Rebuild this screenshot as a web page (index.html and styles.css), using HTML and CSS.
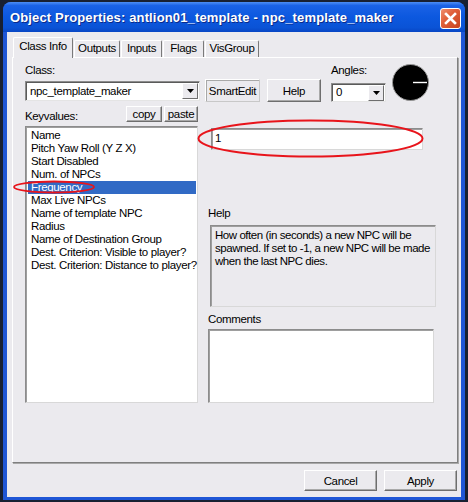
FILE: index.html
```html
<!DOCTYPE html>
<html lang="en">
<head>
  <meta charset="UTF-8" />
  <title>Object Properties</title>
  <link rel="stylesheet" href="styles.css">
</head>
<body>

  <div class="window">
    <div class="titlebar">
      <span class="title">Object Properties: antlion01_template - npc_template_maker</span>
      <span class="close">
        <svg width="13" height="13" viewBox="0 0 13 13"><path d="M2 2 L11 11 M11 2 L2 11" stroke="#fff" stroke-width="2.6" stroke-linecap="square"/></svg>
      </span>
    </div>

    <div class="dialog">
      <!-- Tab strip -->
      <div class="tabs">
        <div class="tab active tab-class">Class Info</div>
        <div class="tab tab-outputs">Outputs</div>
        <div class="tab tab-inputs">Inputs</div>
        <div class="tab tab-flags">Flags</div>
        <div class="tab tab-vis">VisGroup</div>
      </div>

      <div class="panel">
        <div class="top-row">
          <div class="field class-field">
            <span class="label">Class:</span>
            <div class="combo">
              <span class="combo-text">npc_template_maker</span>
              <span class="drop"><svg width="7" height="4" viewBox="0 0 7 4"><path d="M0 0 H7 L3.5 4 Z" fill="#000"/></svg></span>
            </div>
          </div>
          <button class="btn smartedit">SmartEdit</button>
          <button class="btn help-btn">Help</button>
          <div class="field angles-field">
            <span class="label">Angles:</span>
            <div class="combo combo-small">
              <span class="combo-text">0</span>
              <span class="drop"><svg width="7" height="4" viewBox="0 0 7 4"><path d="M0 0 H7 L3.5 4 Z" fill="#000"/></svg></span>
            </div>
          </div>
          <svg class="dial" width="37" height="37" viewBox="0 0 37 37">
            <circle cx="18.5" cy="18.5" r="18" fill="#000" stroke="#9a9a9a" stroke-width="1"/>
            <line x1="21" y1="18.5" x2="35" y2="18.5" stroke="#fff" stroke-width="1.4"/>
          </svg>
        </div>

        <div class="kv-row">
          <span class="label kv-label">Keyvalues:</span>
          <button class="btn btn-mini copy">copy</button>
          <button class="btn btn-mini paste">paste</button>
        </div>

        <div class="main-row">
          <ul class="list">
            <li>Name</li>
            <li>Pitch Yaw Roll (Y Z X)</li>
            <li>Start Disabled</li>
            <li>Num. of NPCs</li>
            <li class="selected">Frequency</li>
            <li>Max Live NPCs</li>
            <li>Name of template NPC</li>
            <li>Radius</li>
            <li>Name of Destination Group</li>
            <li>Dest. Criterion: Visible to player?</li>
            <li>Dest. Criterion: Distance to player?</li>
          </ul>

          <div class="side">
            <div class="edit">1</div>
            <span class="label help-label">Help</span>
            <div class="help-box">How often (in seconds) a new NPC will be spawned. If set to -1, a new NPC will be made when the last NPC dies.</div>
            <span class="label comments-label">Comments</span>
            <div class="comments"></div>
          </div>
        </div>

        <!-- red pen marks drawn over the form -->
        <svg class="marks" width="440" height="200" viewBox="0 0 440 200">
          <ellipse cx="297.5" cy="80.5" rx="112" ry="18" fill="none" stroke="#e8141b" stroke-width="2"/>
          <ellipse cx="41" cy="129" rx="40" ry="5.5" fill="none" stroke="#e8141b" stroke-width="1.8"/>
        </svg>
      </div>

      <div class="buttons">
        <button class="btn big">Cancel</button>
        <button class="btn big">Apply</button>
      </div>
    </div>
  </div>

</body>
</html>
```

FILE: styles.css
```css
* {
  margin: 0;
  padding: 0;
  box-sizing: border-box;
}

body {
  background: #182032;
  font-family: "Liberation Sans", Arial, sans-serif;
  font-size: 11.5px;
  letter-spacing: -0.35px;
  color: #000;
  width: 468px;
  height: 502px;
  overflow: hidden;
}

.window {
  margin: 2px 0 0 3px;
  width: 462px;
  height: 498px;
  background: #1f56d6;
  border-radius: 8px 8px 0 0;
  padding: 0 4px 3px 4px;
  display: flex;
  flex-direction: column;
}

.titlebar {
  height: 30px;
  margin: 0 -4px;
  padding: 0 4px 0 7px;
  border-radius: 8px 8px 0 0;
  background: linear-gradient(#4d8ff5 0%, #1a62e6 12%, #0c58df 50%, #0a53d6 85%, #0846c4 100%);
  display: flex;
  align-items: center;
  justify-content: space-between;
}

.title {
  color: #fff;
  font-weight: bold;
  font-size: 13px;
  letter-spacing: 0.15px;
  text-shadow: 1px 1px 0 #0a2a8a;
  white-space: nowrap;
}

.close {
  width: 21px;
  height: 21px;
  margin-top: 2px;
  border: 1px solid #fff;
  border-radius: 3px;
  background: linear-gradient(135deg, #f09070 0%, #e0603a 40%, #c8431e 100%);
  display: flex;
  align-items: center;
  justify-content: center;
}

.dialog {
  flex: 1;
  background: #ebeaee;
  padding: 5px 3px 0 5px;
}

/* tabs */
.tabs {
  display: flex;
  align-items: flex-end;
  height: 20px;
  margin-left: 1px;
}

.tab {
  height: 17px;
  border: 1px solid #fff;
  border-right: 1px solid #7a7a7a;
  border-bottom: none;
  border-radius: 2px 2px 0 0;
  text-align: center;
  line-height: 15px;
  white-space: nowrap;
}

.tab.active {
  height: 21px;
  margin-bottom: -1px;
  background: #ebeaee;
  position: relative;
  z-index: 2;
  line-height: 17px;
}

.tab-class { width: 60px; }
.tab-outputs { width: 46px; margin-left: 1px; }
.tab-inputs { width: 41px; margin-left: 1px; }
.tab-flags { width: 41px; margin-left: 1px; }
.tab-vis { width: 54px; margin-left: 1px; }

.panel {
  position: relative;
  width: 446px;
  height: 406px;
  border: 1px solid #fff;
  border-right-color: #7f7f7f;
  border-bottom-color: #7f7f7f;
  box-shadow: 1px 1px 0 #a8a8a8;
  padding: 6px 0 0 12px;
}

.label {
  display: block;
  line-height: 13px;
  white-space: nowrap;
}

/* buttons, raised */
.btn {
  font-family: inherit;
  font-size: 11.5px;
  letter-spacing: -0.35px;
  color: #000;
  background: #ebeaee;
  border: 1px solid;
  border-color: #fff #6e6e6e #6e6e6e #fff;
  box-shadow: inset -1px -1px 0 #a9a9a9;
}

.big {
  width: 73px;
  height: 21px;
}

.btn-mini {
  height: 16px;
  line-height: 12px;
}

/* top row */
.top-row {
  display: flex;
  align-items: flex-start;
}

.class-field {
  width: 175px;
}

.combo {
  margin-top: 4px;
  height: 20px;
  background: #fff;
  border: 1px solid;
  border-color: #8c8c8c #e4e4e4 #e4e4e4 #8c8c8c;
  box-shadow: inset 1px 1px 0 #5a5a5a;
  display: flex;
  align-items: center;
  justify-content: space-between;
  padding: 0 1px 0 4px;
}

.combo-text {
  line-height: 13px;
}

.drop {
  width: 16px;
  height: 16px;
  background: #ebeaee;
  border: 1px solid;
  border-color: #fff #6e6e6e #6e6e6e #fff;
  display: flex;
  align-items: center;
  justify-content: center;
}

.smartedit {
  width: 55px;
  height: 23px;
  margin: 15px 0 0 5px;
  border-color: #fff #c8c8c8 #c8c8c8 #fff;
  box-shadow: inset 1px 1px 0 #a8a8a8;
}

.help-btn {
  width: 54px;
  height: 23px;
  margin: 15px 0 0 7px;
}

.angles-field {
  width: 55px;
  margin-left: 10px;
}

.combo-small {
  margin-top: 6px;
  height: 19px;
}

.dial {
  margin-left: 6px;
  margin-top: 0;
}

/* keyvalues header */
.kv-row {
  display: flex;
  align-items: flex-end;
  margin-top: 4px;
  height: 16px;
}

.kv-label {
  width: 101px;
  margin-bottom: -1px;
}

.copy { width: 36px; }
.paste { width: 34px; margin-left: 2px; }

/* list and side column */
.main-row {
  display: flex;
  margin-top: 4px;
}

.list {
  list-style: none;
  width: 173px;
  height: 277px;
  background: #fff;
  border: 1px solid;
  border-color: #8c8c8c #d8d8d8 #d8d8d8 #8c8c8c;
  box-shadow: inset 1px 1px 0 #9e9e9e;
  padding: 2px 1px 0 2px;
}

.list li {
  height: 13px;
  line-height: 13px;
  padding-left: 3px;
  white-space: nowrap;
}

.list li.selected {
  background: #316ac5;
  color: #fff;
}

.side {
  margin-left: 10px;
  width: 228px;
}

.edit {
  margin: 2px 0 0 3px;
  width: 212px;
  height: 22px;
  background: #fff;
  border: 1px solid;
  border-color: #8c8c8c #d8d8d8 #d8d8d8 #8c8c8c;
  box-shadow: inset 1px 1px 0 #9e9e9e;
  padding: 3px 0 0 3px;
  line-height: 13px;
}

.help-label {
  margin-top: 57px;
}

.help-box {
  margin: 5px 0 0 2px;
  width: 226px;
  height: 82px;
  border: 1px solid;
  border-color: #8c8c8c #d8d8d8 #d8d8d8 #8c8c8c;
  box-shadow: inset 1px 1px 0 #9e9e9e;
  padding: 3px 1px 0 4px;
  line-height: 13px;
  letter-spacing: -0.45px;
}

.comments-label {
  margin-top: 6px;
}

.comments {
  margin-top: 3px;
  width: 226px;
  height: 74px;
  background: #fff;
  border: 1px solid;
  border-color: #8c8c8c #d8d8d8 #d8d8d8 #8c8c8c;
  box-shadow: inset 1px 1px 0 #9e9e9e;
}

.marks {
  position: absolute;
  left: 0;
  top: 0;
  overflow: visible;
  pointer-events: none;
}

.buttons {
  display: flex;
  justify-content: flex-end;
  gap: 7px;
  margin-top: 7px;
  padding-right: 1px;
}
```
